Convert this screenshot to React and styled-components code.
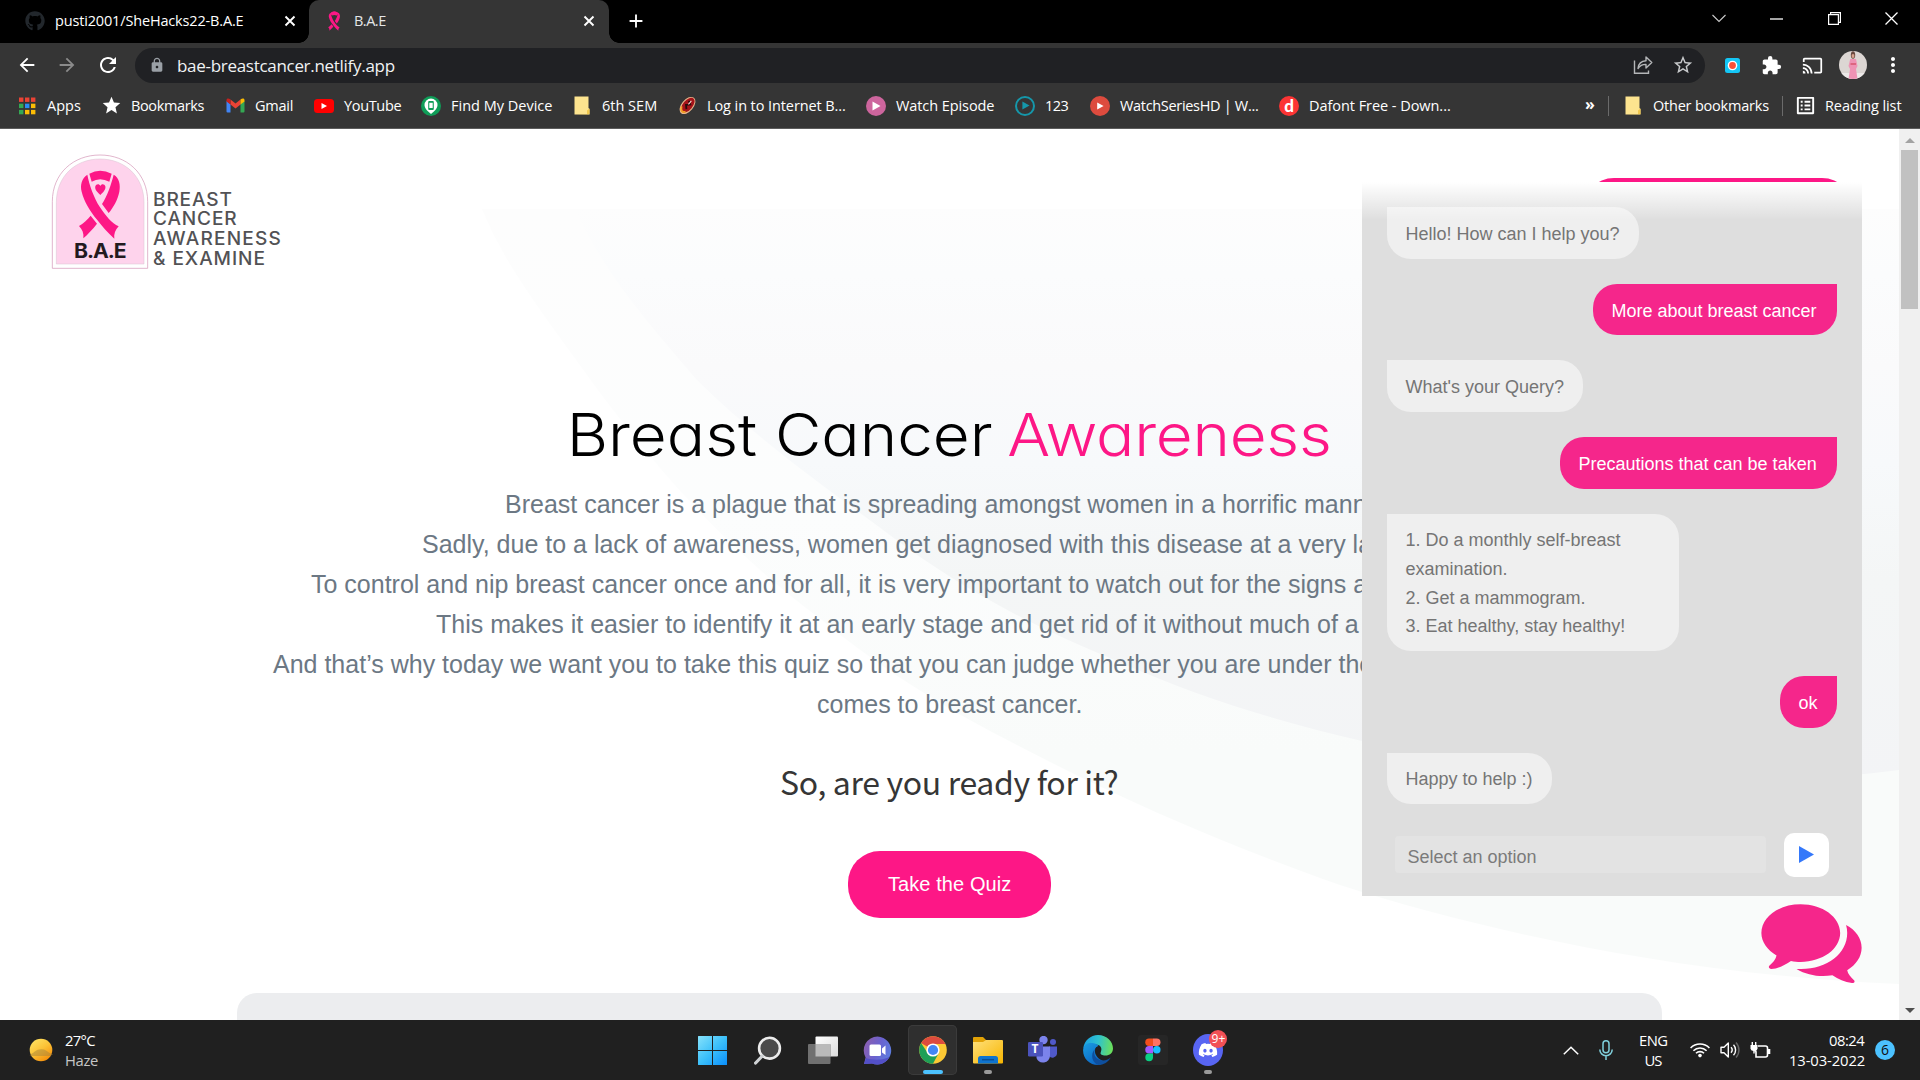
import React, { useLayoutEffect, useRef, useState } from "react";
import styled, { createGlobalStyle, css } from "styled-components";
import {
  MdArrowBack, MdArrowForward, MdRefresh, MdLock, MdStarBorder, MdStar,
  MdExtension, MdCast, MdMoreVert, MdListAlt, MdAdd,
} from "react-icons/md";
import { FaGithub, FaDiscord } from "react-icons/fa";

const Global = createGlobalStyle`
  * { box-sizing: border-box; }
  html, body { margin: 0; padding: 0; overflow: hidden; }
  body { width: 1920px; height: 1080px; font-family: "Open Sans", "Noto Sans", sans-serif; }
  svg { display: block; flex: none; }
`;

/* ---------- text that is tracked to fill a given width ---------- */

const FitBox = styled.span`
  display: inline-block;
  flex: none;
  width: ${(p) => p.$w}px;
  white-space: nowrap;
`;
const FitInner = styled.span`
  display: inline-block;
`;
function Fit({ w, children }) {
  const ref = useRef(null);
  const [spacing, setSpacing] = useState(0);
  useLayoutEffect(() => {
    const natural = ref.current.offsetWidth;
    setSpacing((w - natural) / Math.max(1, String(children).length - 1));
  }, [w, children]);
  return (
    <FitBox $w={w}>
      <FitInner ref={ref} style={{ letterSpacing: spacing }}>{children}</FitInner>
    </FitBox>
  );
}

/* ---------- browser frame ---------- */

const Screen = styled.div`
  width: 1920px;
  height: 1080px;
  display: grid;
  grid-template-rows: 43px 45px 41px 891px 60px;
  overflow: hidden;
  background: #fff;
`;

const TabStrip = styled.div`
  background: #000;
  display: flex;
  color: #fff;
  font-size: 14.5px;
`;
const Tab = styled.div`
  position: relative;
  height: 43px;
  width: ${(p) => p.$w}px;
  padding: 0 ${(p) => p.$right}px 1px ${(p) => p.$left}px;
  display: flex;
  align-items: center;
  background: ${(p) => (p.$active ? "#353535" : "#000")};
  ${(p) => p.$active && css`
    border-radius: 10px 10px 0 0;
    &::before, &::after {
      content: "";
      position: absolute;
      bottom: 0;
      width: 10px;
      height: 10px;
    }
    &::before { left: -10px; background: radial-gradient(circle at 0 0, transparent 9.5px, #353535 10px); }
    &::after { right: -10px; background: radial-gradient(circle at 100% 0, transparent 9.5px, #353535 10px); }
  `}
`;
const TabTitle = styled.div`
  flex: 1;
  margin-left: ${(p) => p.$gap}px;
  padding-bottom: 2px;
  color: ${(p) => (p.$active ? "#e4e6e8" : "#fff")};
`;
const NewTab = styled.div`
  width: 54px;
  padding-bottom: 1px;
  display: flex;
  align-items: center;
  justify-content: center;
`;
const WindowButtons = styled.div`
  margin-left: auto;
  display: flex;
  align-items: center;
  height: 37px;
`;
const WindowButton = styled.div`
  width: 57.3px;
  display: flex;
  justify-content: center;
`;

const Toolbar = styled.div`
  background: #353535;
  display: flex;
  align-items: center;
  color: #fff;
  padding: 0 0 1px 16px;
`;
const NavButton = styled.div`
  width: 22px;
  margin-right: 18px;
  color: ${(p) => (p.$dim ? "#8b8b8b" : "#fff")};
`;
const AddressBar = styled.div`
  flex: none;
  width: 1570px;
  height: 35px;
  margin-left: -1px;
  border-radius: 18px;
  background: #202124;
  display: flex;
  align-items: center;
  padding: 0 11px 0 14px;
  font-size: 17px;
  color: #f1f3f4;
`;
const AddressText = styled.div`
  flex: 1;
  margin-left: 12px;
`;
const AddressIcons = styled.div`
  display: flex;
  gap: 19px;
  align-items: center;
  color: #c8cacc;
`;
const Extensions = styled.div`
  display: flex;
  align-items: center;
  padding-left: 20px;
`;
const ExtensionSlot = styled.div`
  margin-right: ${(p) => p.$after}px;
`;

const BookmarkBar = styled.div`
  background: #353535;
  border-bottom: 1px solid #5c5c5c;
  display: flex;
  align-items: center;
  padding: 0 18px 5px 17px;
  color: #fff;
  font-size: 14.5px;
`;
const Bookmark = styled.div`
  display: flex;
  align-items: center;
  gap: 10px;
  margin-right: ${(p) => p.$after}px;
`;
const BookmarkIcon = styled.div`
  width: 20px;
  height: 20px;
  display: flex;
  align-items: center;
  justify-content: center;
`;
const BookmarkEnd = styled.div`
  margin-left: auto;
  display: flex;
  align-items: center;
`;
const Divider = styled.div`
  width: 1px;
  height: 20px;
  background: #6b6b6b;
  margin: 0 ${(p) => p.$r}px 0 ${(p) => p.$l}px;
`;
const More = styled.div`
  font-weight: 700;
  font-size: 16px;
  line-height: 20px;
  width: 9px;
  padding-bottom: 3px;
`;

const PlayDisc = styled.div`
  width: 20px;
  height: 20px;
  border-radius: 50%;
  background: ${(p) => p.$bg};
  border: ${(p) => (p.$ring ? `2px solid ${p.$ring}` : "none")};
  display: flex;
  align-items: center;
  justify-content: center;
  color: #fff;
  font: 900 17px/18px "Lato", sans-serif;
`;

/* ---------- page ---------- */

const Viewport = styled.main`
  position: relative;
  display: grid;
  grid-template-columns: 1899px 21px;
  overflow: hidden;
`;
const Page = styled.div`
  position: relative;
  height: 891px;
  overflow: hidden;
  background: #fff;
  font-family: "Liberation Sans", Arial, sans-serif;
`;
const Backdrop = styled.svg`
  position: absolute;
  left: 0;
  top: 0;
  pointer-events: none;
`;
const Content = styled.div`
  position: relative;
  display: flex;
  flex-direction: column;
  align-items: center;
`;
const Header = styled.header`
  width: 100%;
  height: 226px;
  padding: 24px 44px 0 50px;
  display: flex;
  justify-content: space-between;
`;
const Logo = styled.div`
  display: flex;
`;
const Badge = styled.div`
  display: grid;
  width: 100px;
  height: 117px;
  > * { grid-area: 1 / 1; }
`;
const BadgeText = styled.div`
  align-self: end;
  justify-self: start;
  margin: 0 0 6px 24px;
  font: 700 20px/26px "Inter", sans-serif;
  color: #231a1f;
  transform: scaleX(1.06);
  transform-origin: 0 50%;
`;
const LogoWords = styled.div`
  display: flex;
  flex-direction: column;
  align-self: start;
  margin: 36.5px 0 0 2.5px;
  font: 500 18px/19.7px "Inter", sans-serif;
  color: #525255;
  transform: scaleX(1.06);
  transform-origin: 0 50%;
`;
const HeaderButton = styled.div`
  width: 272px;
  height: 66px;
  margin: 25px 1px 0 0;
  border-radius: 32px;
  background: #fd1786;
`;
const Title = styled.h1`
  margin: 0;
  height: 129px;
  padding-top: 34px;
  display: flex;
  gap: 14px;
  font: 300 59px/92px "Inter", sans-serif;
  font-feature-settings: "cv11";
  color: #000;
  transform: scaleX(1.08);
`;
const Accent = styled.span`
  color: #fd1786;
`;
const Lines = styled.div`
  width: 100%;
  color: #6c7884;
  font-size: 25px;
  line-height: 40px;
`;
const Line = styled.p`
  margin: 0;
  padding-left: ${(p) => p.$indent}px;
  white-space: nowrap;
`;
const Question = styled.h2`
  margin: 33px 0 0;
  font: 400 32px/48px "Noto Sans CJK SC", sans-serif;
  color: #363636;
`;
const QuizButton = styled.button`
  margin: 46px 0 0;
  width: 203px;
  height: 67px;
  border: 0;
  border-radius: 32px;
  background: #fd1786;
  color: #fff;
  padding: 0 0 1px;
  font: 20px "Liberation Sans", Arial, sans-serif;
`;
const Card = styled.div`
  margin-top: 75px;
  width: 1425px;
  height: 60px;
  border-radius: 20px;
  background: #ecedef;
`;

const Scrollbar = styled.div`
  background: #f0f0f0;
  display: flex;
  flex-direction: column;
  align-items: center;
  padding: 9px 0 7px;
`;
const Arrow = styled.div`
  width: 0;
  height: 0;
  border: 5px solid transparent;
  ${(p) => (p.$down
    ? css`border-top-color: #505050; border-bottom-width: 0; margin-top: auto;`
    : css`border-bottom-color: #a3a3a3; border-top-width: 0;`)}
`;
const Thumb = styled.div`
  width: 17px;
  height: 159px;
  margin-top: 7px;
  background: #c1c1c1;
`;

/* ---------- chat ---------- */

const Chat = styled.aside`
  position: absolute;
  left: 1362px;
  top: 53px;
  width: 500px;
  height: 714px;
  background: #dedede;
  padding: 25.4px 25px 0;
  display: flex;
  flex-direction: column;
  gap: 25px;
  font: 18px/28.75px "Liberation Sans", Arial, sans-serif;
  &::before {
    content: "";
    position: absolute;
    inset: 0 0 auto 0;
    height: 38px;
    background: linear-gradient(#fff, rgba(255, 255, 255, 0));
  }
`;
const Bubble = styled.div`
  flex: none;
  width: ${(p) => p.$w}px;
  padding: 12.6px 0 10.2px 18.5px;
  color: ${(p) => (p.$mine ? "#fff" : "#757575")};
  background: ${(p) => (p.$mine ? "#f5268b" : "#efefef")};
  border-radius: ${(p) => (p.$mine ? "24px 0 24px 24px" : "0 24px 24px 24px")};
  align-self: ${(p) => (p.$mine ? "flex-end" : "flex-start")};
`;
const ChatForm = styled.div`
  display: flex;
  align-items: center;
  justify-content: space-between;
  padding: 0 8px;
  margin-top: 3.6px;
`;
const ChatInput = styled.div`
  width: 371px;
  height: 37px;
  border-radius: 4px;
  background: #e3e3e3;
  color: #7b7b7b;
  padding: 6.5px 0 0 12.5px;
`;
const Send = styled.div`
  width: 45px;
  height: 44px;
  border-radius: 10px;
  background: #fff;
  display: flex;
  align-items: center;
  justify-content: center;
`;
const ChatToggle = styled.div`
  position: absolute;
  left: 1761px;
  top: 775px;
`;

/* ---------- taskbar ---------- */

const Taskbar = styled.footer`
  background: #202020;
  color: #fff;
  display: grid;
  grid-template-columns: 685px 550px 1fr;
  font-size: 14.8px;
  line-height: 20px;
`;
const Weather = styled.div`
  display: flex;
  align-items: center;
  padding-left: 28px;
  gap: 11px;
`;
const Stack = styled.div`
  display: flex;
  flex-direction: column;
  align-items: ${(p) => p.$align || "flex-start"};
`;
const Muted = styled.div`
  color: #c6c6c6;
`;
const Apps = styled.div`
  display: flex;
  align-items: flex-start;
  padding-top: 5px;
`;
const AppButton = styled.div`
  position: relative;
  width: 50px;
  height: 50px;
  margin: 0 2.6px;
  border-radius: 5px;
  display: flex;
  align-items: center;
  justify-content: center;
  ${(p) => p.$active && css`background: #2f2f2f; box-shadow: inset 0 0 0 1px #3b3b3b;`}
  &::after {
    content: "";
    display: ${(p) => (p.$bar ? "block" : "none")};
    position: absolute;
    bottom: 1px;
    width: ${(p) => p.$bar}px;
    height: 4px;
    border-radius: 2px;
    background: ${(p) => (p.$active ? "#4cc2ff" : "#9a9a9a")};
  }
`;
const DiscordDisc = styled.div`
  width: 30px;
  height: 32px;
  border-radius: 50%;
  background: #5865f2;
  color: #fff;
  display: flex;
  align-items: center;
  justify-content: center;
`;
const Count = styled.div`
  position: absolute;
  right: 5px;
  top: 5px;
  width: 18px;
  height: 18px;
  border-radius: 50%;
  background: #f25056;
  font-size: 12px;
  line-height: 17px;
  text-align: center;
`;
const Tray = styled.div`
  display: flex;
  align-items: center;
  justify-content: flex-end;
  padding-right: 25px;
`;
const TraySlot = styled.div`
  margin-right: ${(p) => p.$after}px;
`;
const Notice = styled.div`
  width: 20px;
  height: 20px;
  border-radius: 50%;
  background: #4cc2ff;
  color: #101010;
  text-align: center;
  font-size: 14px;
  line-height: 20px;
`;

/* ---------- drawings ---------- */

const Play = ({ fill, s = 10 }) => (
  <svg width={s} height={s} viewBox="0 0 10 10"><path d="M1.5 0.5 L9.5 5 L1.5 9.5Z" fill={fill} /></svg>
);
const Folder = () => (
  <svg width="16" height="19" viewBox="0 0 16 19">
    <path d="M0.5 0.5 H14.5 V12 L15.5 13 V18.5 H0.5Z" fill="#fde48f" />
    <path d="M0.5 18.3 H15.5 V12.5 L13 14.5 V18Z" fill="#f1c84c" />
  </svg>
);
const ribbon = {
  top: "M268 131 Q300 113 335 131 L328 155 Q300 140 275 155Z",
  left: "M262 134 C245 145 240 165 245 185 C252 215 272 245 290 268 C305 288 325 310 343 326 C341 312 346 300 356 289 C335 280 318 258 300 232 C280 200 268 165 262 134Z",
  right: "M341 134 C358 143 362 165 358 185 C353 210 340 232 326 249 L306 222 C322 198 333 165 341 134Z",
  tail: "M272 257 L291 281 C278 298 262 314 250 325 C252 310 247 298 237 288 C250 281 262 269 272 257Z",
};
const RibbonPaths = () => (
  <g fill="#fd1786">{Object.values(ribbon).map((d) => <path key={d} d={d} />)}</g>
);
const BadgeArt = () => (
  <svg width="100" height="117" viewBox="150 69 300 351">
    <path d="M157 415 V215 C157 130 220 75 300 75 C380 75 443 130 443 215 V415Z" fill="#fff" stroke="#d291b4" strokeWidth="2" />
    <path d="M169 402 V218 C169 140 225 87 300 87 C375 87 432 140 432 218 V402Z" fill="#fed3ec" stroke="#d8c3d0" strokeWidth="1.5" />
    <RibbonPaths />
    <path d="M301 195 C290 185 284 178 286 169 C288 161 298 160 301 168 C304 160 314 161 316 169 C318 178 311 186 301 195Z" fill="#fd1786" />
  </svg>
);
const Favicon = () => (
  <svg width="12" height="20" viewBox="235 116 125 212" preserveAspectRatio="none">
    <RibbonPaths />
    <path d="M268 131 Q300 113 335 131 L345 140 L328 165 Q300 150 275 165 L258 140Z" fill="#fd1786" />
  </svg>
);
const Cross = () => (
  <svg width="12" height="12" viewBox="0 0 12 12"><path d="M1.5 1.5 L10.5 10.5 M10.5 1.5 L1.5 10.5" stroke="#fff" strokeWidth="1.9" /></svg>
);
const AppsGrid = () => (
  <svg width="18" height="18" viewBox="0 0 18 18">
    {["#ea4335", "#ea4335", "#ea4335", "#34a853", "#2a8cf4", "#fbbc05", "#34a853", "#fbbc05", "#fbbc05"].map((c, i) => (
      <rect key={i} x={1 + (i % 3) * 6} y={0.5 + Math.floor(i / 3) * 6.2} width="4.4" height="4.4" fill={c} />
    ))}
  </svg>
);
const Gmail = () => (
  <svg width="19" height="15" viewBox="0 0 19 15">
    <path d="M0.5 3 V13.5 Q0.5 14.5 1.5 14.5 H4.5 V6Z" fill="#4285f4" />
    <path d="M18.5 3 V13.5 Q18.5 14.5 17.5 14.5 H14.5 V6Z" fill="#34a853" />
    <path d="M4.5 1.5 L9.5 5.5 L14.5 1.5 V6.5 L9.5 10.5 L4.5 6.5Z" fill="#ea4335" />
    <path d="M0.5 3.5 V2 C0.5 0.3 2.5 -0.2 4.5 1.5 V6.5Z" fill="#c5221f" />
    <path d="M18.5 3.5 V2 C18.5 0.3 16.5 -0.2 14.5 1.5 V6.5Z" fill="#fbbc04" />
  </svg>
);
const YouTube = () => (
  <svg width="20" height="14" viewBox="0 0 20 14"><rect width="20" height="14" rx="3.5" fill="#f00" /><path d="M7.5 4 L13 7 L7.5 10Z" fill="#fff" /></svg>
);
const FindDevice = () => (
  <svg width="20" height="20" viewBox="0 0 20 20">
    <circle cx="10" cy="10" r="10" fill="#0f9d58" />
    <path d="M10 18 C7 15.5 3.5 12.5 3.5 9 A6.5 6.5 0 0 1 16.5 9 C16.5 12.5 13 15.5 10 18Z" fill="#fff" />
    <rect x="7.2" y="5" width="5.6" height="9" rx="1" fill="#0f9d58" /><rect x="8.3" y="6.8" width="3.4" height="5.2" fill="#fff" />
  </svg>
);
const Emblem = () => (
  <svg width="19" height="19" viewBox="0 0 19 19">
    <g transform="rotate(40 9.5 9.5)">
      <ellipse cx="9.5" cy="9.5" rx="6" ry="10" fill="#e8b48a" />
      <ellipse cx="9.5" cy="9" rx="4.8" ry="8.8" fill="#a51319" />
      <path d="M7.5 5 L11 7 L8 10 L11 13" stroke="#2a0b0b" strokeWidth="1.8" fill="none" />
      <path d="M9.5 3.5 V8" stroke="#f5e5dc" strokeWidth="1" />
      <path d="M5.5 14 Q9 20 12 15.5" stroke="#f29d22" strokeWidth="1.8" fill="none" />
    </g>
  </svg>
);
const Share = () => (
  <svg width="20" height="20" viewBox="0 0 20 20" fill="none" stroke="#b4b6b8" strokeWidth="1.4">
    <path d="M1.5 5.5 V18.3 H15.5 V15.5" />
    <path d="M5 13.5 C5.5 8.5 8.5 6 13 5.8 V2 L18.8 7.6 L13 13 V9.4 C9.5 9.3 7 10.5 5 13.5Z" strokeLinejoin="round" />
  </svg>
);
const Recorder = () => (
  <svg width="15" height="15" viewBox="0 0 15 15">
    <rect width="15" height="15" rx="2.5" fill="#14c6f5" />
    <circle cx="7.5" cy="7.5" r="4.8" fill="#fff" /><circle cx="7.5" cy="7.5" r="3.4" fill="#fb5037" />
  </svg>
);
const Avatar = () => (
  <svg width="28" height="28" viewBox="0 0 28 28">
    <defs><clipPath id="face"><circle cx="14" cy="14" r="14" /></clipPath></defs>
    <g clipPath="url(#face)">
      <rect width="28" height="28" fill="#dcd6d3" />
      <rect y="22" width="28" height="6" fill="#ece9e8" />
      <path d="M11.2 8 L17 8 L18.5 15 L17 18 L18.5 28 H9.5 L11 18 L9.5 15Z" fill="#ee93b4" />
      <ellipse cx="14" cy="4" rx="2.2" ry="3.8" fill="#6b4a40" />
      <ellipse cx="14" cy="5" rx="1.4" ry="2" fill="#d8a38e" />
      <path d="M11.5 12 H17 V14 H11.5Z" fill="#dd6580" />
    </g>
  </svg>
);
const ToggleArt = () => (
  <svg width="101" height="80" viewBox="1138 1212 273 239" preserveAspectRatio="none" fill="#f5268b">
    <path d="M1245 1213 C1304 1213 1352 1251 1352 1299 C1352 1347 1304 1385 1245 1385 C1237 1385 1227 1384 1219 1382 C1203 1394 1184 1405 1166 1406 C1160 1406 1157 1401 1161 1396 C1170 1387 1178 1378 1180 1366 C1155 1350 1139 1325 1139 1299 C1139 1251 1186 1213 1245 1213Z" />
    <path d="M1368 1275 C1394 1290 1410 1315 1410 1343 C1410 1370 1395 1394 1371 1410 C1373 1421 1380 1430 1388 1438 C1394 1443 1390 1449 1384 1448 C1364 1446 1347 1437 1331 1425 C1297 1431 1263 1425 1234 1406 C1310 1412 1371 1364 1371 1299 C1371 1291 1370 1283 1368 1275Z" />
  </svg>
);

const Haze = () => (
  <svg width="26" height="24" viewBox="0 0 26 24">
    <defs><linearGradient id="sun" x1="0.1" y1="0" x2="0.8" y2="1"><stop offset="0" stopColor="#ffe465" /><stop offset="0.5" stopColor="#fcc236" /><stop offset="1" stopColor="#f58a07" /></linearGradient></defs>
    <circle cx="13" cy="12" r="11.3" fill="url(#sun)" />
    <path d="M4 15.5 C7 14 8 11.5 13 11.2 C17 11 19 13 21.5 15 L25 16.5 L22 18 H4 L1.5 17.5Z" fill="#a5843c" opacity="0.5" />
  </svg>
);
const Windows = () => (
  <svg width="29" height="29" viewBox="0 0 29 29">
    <defs><linearGradient id="win" x1="0" y1="0" x2="1" y2="1"><stop offset="0" stopColor="#87e2fb" /><stop offset="0.5" stopColor="#3cc0fa" /><stop offset="1" stopColor="#0a8efb" /></linearGradient></defs>
    <path d="M0 0.5 Q0 0 .5 0 H14 V14 H0Z M15 0 H28.5 Q29 0 29 .5 V14 H15Z M0 15 H14 V29 H.5 Q0 29 0 28.5Z M15 15 H29 V28.5 Q29 29 28.5 29 H15Z" fill="url(#win)" />
  </svg>
);
const Search = () => (
  <svg width="28" height="29" viewBox="0 0 28 29">
    <circle cx="15.5" cy="12.2" r="10.4" fill="#4a4a4a" stroke="#ececec" strokeWidth="2.6" />
    <path d="M8.3 20 L1.6 27" stroke="#cfd2d4" strokeWidth="3.2" strokeLinecap="round" />
  </svg>
);
const TaskView = () => (
  <svg width="30" height="28" viewBox="0 0 30 28">
    <defs><linearGradient id="tv" x1="0" y1="0" x2="1" y2="1"><stop offset="0" stopColor="#fff" /><stop offset="1" stopColor="#dcdcdc" /></linearGradient></defs>
    <rect x="7.5" y="0.5" width="22.5" height="20" rx="1" fill="url(#tv)" />
    <rect x="0" y="8" width="22.5" height="20" rx="1" fill="#707070" />
    <rect x="7.5" y="8" width="15" height="12.5" fill="#bababa" />
  </svg>
);
const Meet = () => (
  <svg width="29" height="29" viewBox="0 0 29 29">
    <defs><linearGradient id="meet" x1="0" y1="0.3" x2="1" y2="0.7"><stop offset="0" stopColor="#8b5fb0" /><stop offset="0.5" stopColor="#6a62cf" /><stop offset="1" stopColor="#5c7fe0" /></linearGradient></defs>
    <path d="M14.5 0.5 A14 14 0 1 1 9 27.5 L1 28 L2.6 21.5 A14 14 0 0 1 14.5 0.5Z" fill="url(#meet)" />
    <path d="M3 22 C8 24 22 25 27 20 A14 14 0 0 1 9 27.5 L1 28Z" fill="#5350c8" />
    <rect x="6.5" y="8.5" width="11.5" height="11.5" rx="1.5" fill="#fff" />
    <path d="M19 12.5 L22.5 9.5 V19 L19 16.5Z" fill="#fff" />
  </svg>
);
const Chrome = () => (
  <svg width="28" height="28" viewBox="0 0 28 28">
    <circle cx="14" cy="14" r="13.8" fill="#fcc934" />
    <path d="M14 14 L2.05 7.1 A13.8 13.8 0 0 1 25.95 7.1 L26.4 8 H14Z" fill="#dd4b3e" />
    <path d="M2.05 7.1 A13.8 13.8 0 0 0 14 27.8 L19.6 17.2 L14 14 L8 16Z" fill="#1e9f57" />
    <circle cx="14" cy="14" r="6.6" fill="#fff" /><circle cx="14" cy="14" r="5.1" fill="#4387f5" />
  </svg>
);
const Explorer = () => (
  <svg width="30" height="30" viewBox="0 0 30 30">
    <defs><linearGradient id="fold" x1="0" y1="0" x2="1" y2="1"><stop offset="0" stopColor="#ffe07a" /><stop offset="1" stopColor="#f7b500" /></linearGradient></defs>
    <path d="M0 3 Q0 2 1 2 H10 L13 5 V11 H0Z" fill="#e2a206" />
    <path d="M0 7 H10 L13 5 H29 Q30 5 30 6 V27.5 Q30 28.5 29 28.5 H1 Q0 28.5 0 27.5Z" fill="url(#fold)" />
    <path d="M5 28.5 V23.5 Q5 21 7.5 21 H22.5 Q25 21 25 23.5 V28.5Z" fill="#0f74cf" />
    <path d="M9 24.7 H21" stroke="#0a4f96" strokeWidth="1.5" />
  </svg>
);
const TeamsMark = styled.div`
  display: grid;
  width: 30px;
  height: 28px;
  > * { grid-area: 1 / 1; }
`;
const TeamsLetter = styled.div`
  padding: 3px 0 0 4px;
  font: 700 12px/20px "Open Sans", sans-serif;
`;
const Teams = () => (
  <TeamsMark>
    <svg width="30" height="28" viewBox="0 0 30 28">
      <circle cx="15.5" cy="4" r="4.2" fill="#7b83eb" /><circle cx="25" cy="6" r="3" fill="#5059c9" />
      <path d="M21 10.5 H29 V18 A4.5 4.5 0 0 1 21 20Z" fill="#5059c9" />
      <path d="M9 10.5 H22 V20 A7 7 0 0 1 8.5 22Z" fill="#7b83eb" />
      <rect x="0" y="6" width="15" height="14.5" rx="1.2" fill="#4b53bc" />
    </svg>
    <TeamsLetter>T</TeamsLetter>
  </TeamsMark>
);
const Edge = () => (
  <svg width="30" height="30" viewBox="0 0 30 30">
    <defs>
      <linearGradient id="e1" x1="0" y1="0.3" x2="1" y2="0.4"><stop offset="0" stopColor="#1ba0e2" /><stop offset="0.5" stopColor="#2fc2cf" /><stop offset="1" stopColor="#6be05a" /></linearGradient>
      <linearGradient id="e2" x1="0" y1="0" x2="0.7" y2="1"><stop offset="0" stopColor="#1a9de0" /><stop offset="1" stopColor="#0b63c4" /></linearGradient>
    </defs>
    <path d="M0.3 13 C1.5 5.5 7.5 0 15 0 C24 0 30 6.5 30 13.5 C30 18 26.5 20.5 22.5 20.5 C19 20.5 16.5 19.3 17.5 17.5 C20 13 17 9.5 12.5 9.5 C7 9.5 2 11 0.3 13Z" fill="url(#e1)" />
    <path d="M0.2 14 C1 9 5.5 7.5 9.5 8 C13 8.5 15 10 15.5 11 C11 12 9.5 21 19 25.5 C23 27 19 30 15 30 C6 30 -0.8 22.5 0.2 14Z" fill="url(#e2)" />
    <path d="M12 14 C9.5 20 13.5 25 19 25.5 C23 25.8 26 24 27.8 22.5 C25.5 27 20.5 30 15.5 30 C9 28 7 19 12 14Z" fill="#0e4f9e" />
    <path d="M12.3 13.7 C13 12 14.5 11.3 15.8 11.5 C18 13 18.4 15.5 17.3 17.8 C17 19 18 20 20 20.5 C16 21.5 12 18 12.3 13.7Z" fill="#202020" />
  </svg>
);
const Figma = () => (
  <svg width="30" height="30" viewBox="0 0 30 30">
    <rect width="30" height="30" rx="3" fill="#262626" />
    <path d="M15 3.5 H11 A3.75 3.75 0 0 0 11 11 H15Z" fill="#f24e1e" />
    <path d="M15 3.5 H18.7 A3.75 3.75 0 0 1 18.7 11 H15Z" fill="#ff7262" />
    <path d="M15 11 H11 A3.75 3.75 0 0 0 11 18.5 H15Z" fill="#a259ff" />
    <circle cx="18.8" cy="14.75" r="3.75" fill="#1abcfe" />
    <path d="M15 18.5 H11 A3.85 3.85 0 1 0 15 22.5Z" fill="#0acf83" />
  </svg>
);
const Chevron = () => (
  <svg width="16" height="9" viewBox="0 0 16 9"><path d="M0.8 8.2 L8 1.2 L15.2 8.2" fill="none" stroke="#fff" strokeWidth="1.5" /></svg>
);
const Mic = () => (
  <svg width="14" height="20" viewBox="0 0 14 20" fill="none" stroke="#7fd0dc" strokeWidth="1.5">
    <rect x="4" y="0.8" width="6" height="12" rx="3" /><path d="M0.8 9.5 A6.2 6.2 0 0 0 13.2 9.5 M7 16 V20" />
  </svg>
);
const Wifi = () => (
  <svg width="20" height="16" viewBox="0 0 20 16" fill="none" stroke="#fff" strokeWidth="1.6">
    <path d="M0.6 6 A13.2 13.2 0 0 1 19.4 6 M3.4 8.8 A9.3 9.3 0 0 1 16.6 8.8 M6 11.3 A5.6 5.6 0 0 1 14 11.3" />
    <circle cx="10" cy="13.6" r="1.8" fill="#fff" stroke="none" />
  </svg>
);
const Volume = () => (
  <svg width="20" height="18" viewBox="0 0 20 18" fill="none" stroke="#fff" strokeWidth="1.4">
    <path d="M1 6.2 H4 L8.3 2 V16 L4 11.8 H1Z" strokeLinejoin="round" />
    <path d="M11 6.3 A4 4 0 0 1 11 11.7 M13.5 3.8 A7.5 7.5 0 0 1 13.5 14.2" />
    <path d="M16 1.5 A11 11 0 0 1 16 16.5" stroke="#666" />
  </svg>
);
const Battery = () => (
  <svg width="21" height="17" viewBox="0 0 21 17" fill="none" stroke="#fff" strokeWidth="1.6">
    <path d="M8 4 H15.5 Q17.5 4 17.5 6 V13 Q17.5 15 15.5 15 H6 V10 Q6 8.5 4 8.5" />
    <path d="M0.5 3 H7.5 V6.5 Q7 9 4 9 Q1 9 0.5 6.5Z" fill="#fff" stroke="none" />
    <path d="M2.3 0 V3 M5.7 0 V3 M4 8 V11.5" strokeWidth="1.4" /><path d="M19 7 V12" strokeWidth="2.6" />
  </svg>
);

/* ---------- data ---------- */

const bookmarks = [
  { icon: <AppsGrid />, label: "Apps", w: 34, after: 20 },
  { icon: <MdStar size={21} />, label: "Bookmarks", w: 73, after: 21 },
  { icon: <Gmail />, label: "Gmail", w: 38, after: 21 },
  { icon: <YouTube />, label: "YouTube", w: 58, after: 19 },
  { icon: <FindDevice />, label: "Find My Device", w: 101, after: 20 },
  { icon: <Folder />, label: "6th SEM", w: 55, after: 20 },
  { icon: <Emblem />, label: "Log in to Internet B...", w: 139, after: 20 },
  { icon: <PlayDisc $bg="#cd659d"><Play fill="#fff" /></PlayDisc>, label: "Watch Episode", w: 98, after: 21 },
  { icon: <PlayDisc $bg="transparent" $ring="#1597aa"><Play fill="#1597aa" s={9} /></PlayDisc>, label: "123", w: 24, after: 21 },
  { icon: <PlayDisc $bg="#dd4b3e"><Play fill="#fff" s={8} /></PlayDisc>, label: "WatchSeriesHD | W...", w: 139, after: 20 },
  { icon: <PlayDisc $bg="#fb3434">d</PlayDisc>, label: "Dafont Free - Down...", w: 142, after: 0 },
];

const lines = [
  [505, "Breast cancer is a plague that is spreading amongst women in a horrific manner."],
  [422, "Sadly, due to a lack of awareness, women get diagnosed with this disease at a very late"],
  [311, "To control and nip breast cancer once and for all, it is very important to watch out for the signs and"],
  [436, "This makes it easier to identify it at an early stage and get rid of it without much of a"],
  [273, "And that’s why today we want you to take this quiz so that you can judge whether you are under the"],
  [817, "comes to breast cancer."],
];

const messages = [
  { w: 252, text: "Hello! How can I help you?" },
  { w: 244, text: "More about breast cancer", mine: true },
  { w: 196, text: "What's your Query?" },
  { w: 277, text: "Precautions that can be taken", mine: true },
  { w: 292, text: ["1. Do a monthly self-breast", "examination.", "2. Get a mammogram.", "3. Eat healthy, stay healthy!"] },
  { w: 57, text: "ok", mine: true },
  { w: 165, text: "Happy to help :)" },
];

const apps = [
  { icon: <Windows /> },
  { icon: <Search /> },
  { icon: <TaskView /> },
  { icon: <Meet /> },
  { icon: <Chrome />, active: true, bar: 20 },
  { icon: <Explorer />, bar: 8 },
  { icon: <Teams /> },
  { icon: <Edge /> },
  { icon: <Figma /> },
  { icon: <><DiscordDisc><FaDiscord size={20} /></DiscordDisc><Count>9+</Count></>, bar: 8 },
];

export default function App() {
  return (
    <>
      <Global />
      <Screen>
        <TabStrip>
          <Tab $w={309} $left={25} $right={13}>
            <FaGithub size={20} color="#22272c" />
            <TabTitle $gap={10}><Fit w={189}>pusti2001/SheHacks22-B.A.E</Fit></TabTitle>
            <Cross />
          </Tab>
          <Tab $w={300} $left={19} $right={14} $active>
            <Favicon />
            <TabTitle $gap={14} $active><Fit w={32}>B.A.E</Fit></TabTitle>
            <Cross />
          </Tab>
          <NewTab><MdAdd size={22} /></NewTab>
          <WindowButtons>
            <WindowButton><svg width="14" height="9" viewBox="0 0 14 9"><path d="M0.5 1 L7 7.5 L13.5 1" fill="none" stroke="#ccc" strokeWidth="1.1" /></svg></WindowButton>
            <WindowButton><svg width="13" height="2" viewBox="0 0 13 2"><path d="M0 1 H13" stroke="#fff" strokeWidth="1.3" /></svg></WindowButton>
            <WindowButton><svg width="13" height="13" viewBox="0 0 13 13" fill="none" stroke="#fff" strokeWidth="1.2"><path d="M0.6 2.6 H10.4 V12.4 H0.6Z M2.6 2.6 V0.6 H12.4 V10.4 H10.4" /></svg></WindowButton>
            <WindowButton><svg width="13" height="13" viewBox="0 0 13 13"><path d="M0.5 0.5 L12.5 12.5 M12.5 0.5 L0.5 12.5" stroke="#fff" strokeWidth="1.3" /></svg></WindowButton>
          </WindowButtons>
        </TabStrip>

        <Toolbar>
          <NavButton><MdArrowBack size={22} /></NavButton>
          <NavButton $dim><MdArrowForward size={22} /></NavButton>
          <NavButton><MdRefresh size={24} /></NavButton>
          <AddressBar>
            <MdLock size={16} color="#9aa0a6" />
            <AddressText><Fit w={218}>bae-breastcancer.netlify.app</Fit></AddressText>
            <AddressIcons><Share /><MdStarBorder size={22} /></AddressIcons>
          </AddressBar>
          <Extensions>
            <ExtensionSlot $after={21}><Recorder /></ExtensionSlot>
            <ExtensionSlot $after={20}><MdExtension size={21} /></ExtensionSlot>
            <ExtensionSlot $after={16}><MdCast size={21} /></ExtensionSlot>
            <ExtensionSlot $after={14}><Avatar /></ExtensionSlot>
            <MdMoreVert size={24} />
          </Extensions>
        </Toolbar>

        <BookmarkBar>
          {bookmarks.map((b) => (
            <Bookmark key={b.label} $after={b.after}>
              <BookmarkIcon>{b.icon}</BookmarkIcon>
              <Fit w={b.w}>{b.label}</Fit>
            </Bookmark>
          ))}
          <BookmarkEnd>
            <More>»</More>
            <Divider $l={14} $r={14} />
            <Bookmark $after={0}><BookmarkIcon><Folder /></BookmarkIcon><Fit w={116}>Other bookmarks</Fit></Bookmark>
            <Divider $l={13} $r={12} />
            <Bookmark $after={0}><BookmarkIcon><MdListAlt size={23} /></BookmarkIcon><Fit w={77}>Reading list</Fit></Bookmark>
          </BookmarkEnd>
        </BookmarkBar>

        <Viewport>
          <Page>
            <Backdrop width="1899" height="891" viewBox="0 129 1899 891">
              <defs>
                <linearGradient id="outer" gradientUnits="userSpaceOnUse" x1="0" y1="205" x2="0" y2="985">
                  <stop offset="0" stopColor="#fdfdfd" /><stop offset="0.4" stopColor="#fcfdfd" /><stop offset="0.7" stopColor="#f9fbfa" /><stop offset="1" stopColor="#f9fbfa" />
                </linearGradient>
                <linearGradient id="inner" gradientUnits="userSpaceOnUse" x1="0" y1="205" x2="0" y2="780">
                  <stop offset="0" stopColor="#fdfdfd" /><stop offset="0.12" stopColor="#fbfcfd" /><stop offset="0.28" stopColor="#fafafb" /><stop offset="0.45" stopColor="#f7f9fb" /><stop offset="0.65" stopColor="#f4f6f6" /><stop offset="1" stopColor="#f3f4f6" />
                </linearGradient>
              </defs>
              <path d="M482 209 C505 265 540 310 587 375 C645 455 720 545 822 620 C870 660 920 692 968 719 C1080 780 1200 836 1340 885 C1480 930 1680 975 1899 984 V209Z" fill="url(#outer)" />
              <path d="M575 209 C605 275 650 325 697 380 C760 442 820 483 906 547 C970 593 1040 630 1117 661 C1200 698 1280 722 1362 741 C1560 785 1740 790 1899 770 V209Z" fill="url(#inner)" />
            </Backdrop>
            <Content>
              <Header>
                <Logo>
                  <Badge>
                    <BadgeArt />
                    <BadgeText><Fit w={50}>B.A.E</Fit></BadgeText>
                  </Badge>
                  <LogoWords>
                    <Fit w={74}>BREAST</Fit>
                    <Fit w={79}>CANCER</Fit>
                    <Fit w={121}>AWARENESS</Fit>
                    <Fit w={106}>&amp; EXAMINE</Fit>
                  </LogoWords>
                </Logo>
                <HeaderButton />
              </Header>
              <Title>
                <Fit w={394}>Breast Cancer</Fit>
                <Accent><Fit w={301}>Awareness</Fit></Accent>
              </Title>
              <Lines>
                {lines.map(([x, t]) => <Line key={x} $indent={x}>{t}</Line>)}
              </Lines>
              <Question><Fit w={339}>So, are you ready for it?</Fit></Question>
              <QuizButton><Fit w={123}>Take the Quiz</Fit></QuizButton>
              <Card />
            </Content>
          </Page>
          <Scrollbar>
            <Arrow />
            <Thumb />
            <Arrow $down />
          </Scrollbar>
          <Chat>
            {messages.map((m, i) => (
              <Bubble key={i} $w={m.w} $mine={m.mine}>
                {Array.isArray(m.text) ? m.text.map((t) => <div key={t}>{t}</div>) : m.text}
              </Bubble>
            ))}
            <ChatForm>
              <ChatInput>Select an option</ChatInput>
              <Send><svg width="15" height="17" viewBox="0 0 15 17"><path d="M0 0 L15 8.5 L0 17Z" fill="#3478fa" /></svg></Send>
            </ChatForm>
          </Chat>
          <ChatToggle><ToggleArt /></ChatToggle>
        </Viewport>

        <Taskbar>
          <Weather>
            <Haze />
            <Stack><Fit w={31}>27°C</Fit><Muted><Fit w={33}>Haze</Fit></Muted></Stack>
          </Weather>
          <Apps>
            {apps.map((a, i) => <AppButton key={i} $active={a.active} $bar={a.bar}>{a.icon}</AppButton>)}
          </Apps>
          <Tray>
            <TraySlot $after={20}><Chevron /></TraySlot>
            <TraySlot $after={26}><Mic /></TraySlot>
            <TraySlot $after={22}><Stack $align="center"><Fit w={29}>ENG</Fit><Fit w={18}>US</Fit></Stack></TraySlot>
            <TraySlot $after={10}><Wifi /></TraySlot>
            <TraySlot $after={10}><Volume /></TraySlot>
            <TraySlot $after={18}><Battery /></TraySlot>
            <TraySlot $after={10}><Stack $align="flex-end"><Fit w={36}>08:24</Fit><Fit w={76}>13-03-2022</Fit></Stack></TraySlot>
            <Notice>6</Notice>
          </Tray>
        </Taskbar>
      </Screen>
    </>
  );
}
